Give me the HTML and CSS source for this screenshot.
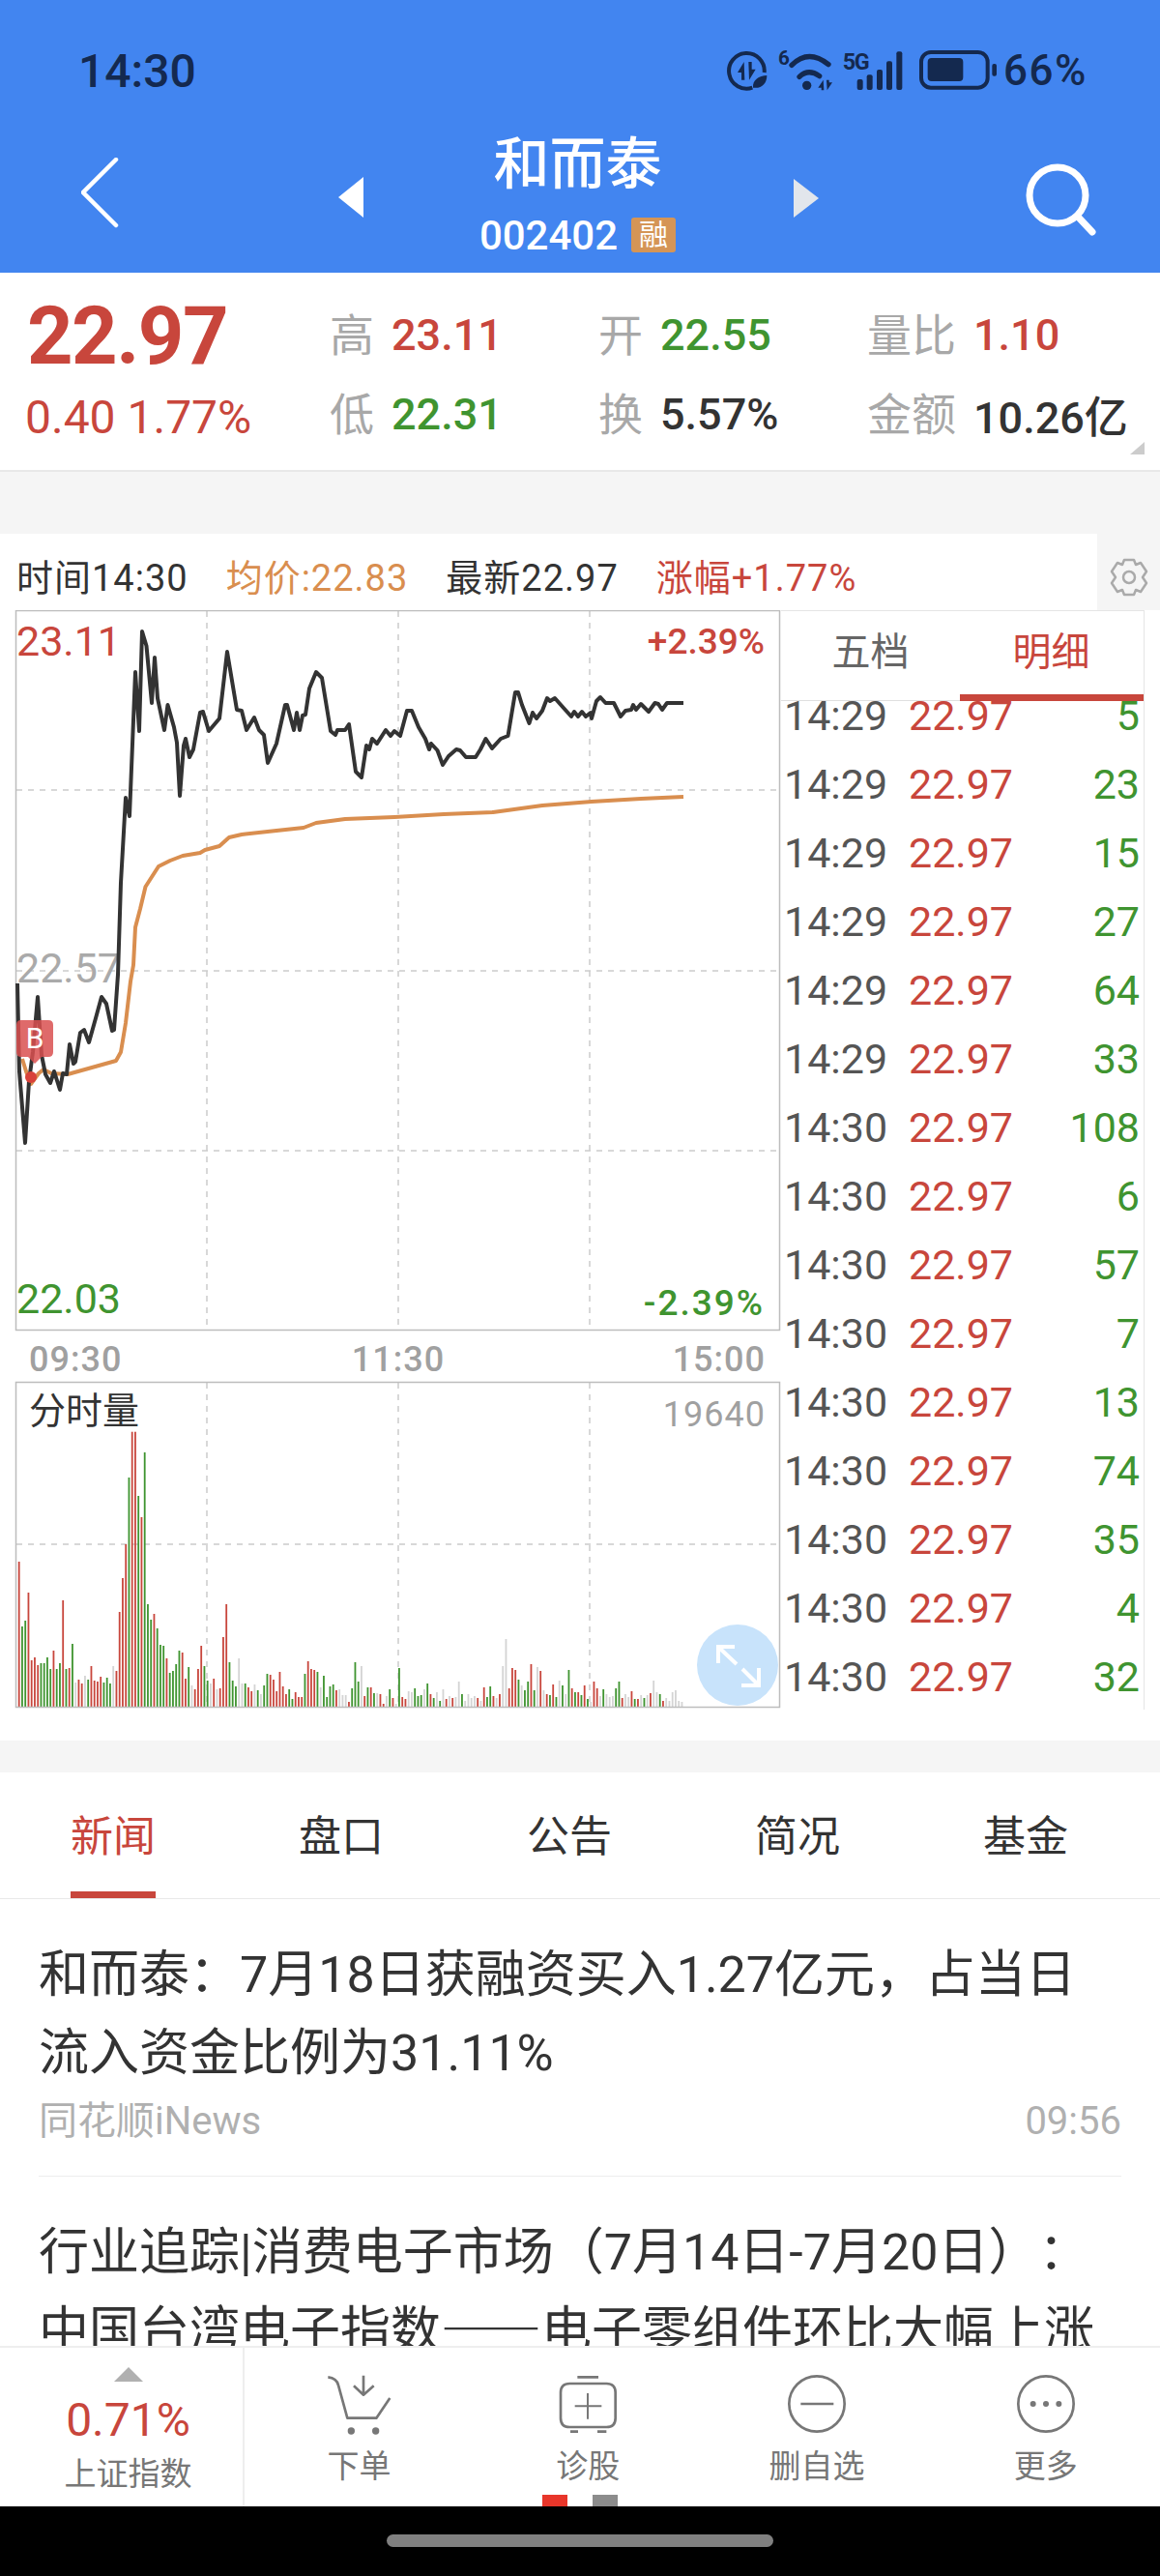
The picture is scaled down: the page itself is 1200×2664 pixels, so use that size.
FILE: index.html
```html
<!DOCTYPE html>
<html lang="zh-CN">
<head>
    <meta charset="UTF-8">
    <meta name="viewport" content="width=device-width, initial-scale=1.0">
    <title>和而泰 002402</title>
    <link rel="stylesheet" href="styles.css">
</head>
<body>
<div class="page">
    <header class="header">
        <div class="status-bar">
            <span class="clock">14:30</span>
            <div class="status-icons">
                <svg class="status-svg" viewBox="0 0 888 180">
                    <path class="ink-line" d="M118 152A55 55 0 1 1 155 105"/>
                    <path class="ink" d="M92 72L72 105H84V128H94ZM108 128L128 95H116V72H106Z"/>
                    <path class="ink" d="M120 152C118 128 138 115 163 114C163 140 146 156 120 152Z"/>
                    <text class="status-six" x="198" y="82">6</text>
                    <path class="ink-line wifi" d="M240 82Q292 30 354 80M264 118Q292 92 326 116"/>
                    <circle class="ink" cx="287" cy="145" r="14"/>
                    <path class="ink" d="M338 128L322 152H332V160H340ZM350 160L366 136H356V128H348Z"/>
                    <text class="status-5g" x="398" y="96">5G</text>
                    <rect class="ink" x="443" y="126" width="18" height="33" rx="6"/>
                    <rect class="ink" x="473" y="112" width="18" height="47" rx="6"/>
                    <rect class="ink" x="504" y="96" width="18" height="63" rx="6"/>
                    <rect class="ink" x="534" y="70" width="18" height="89" rx="6"/>
                    <rect class="ink" x="565" y="40" width="18" height="119" rx="6"/>
                    <rect class="ink-line" x="642" y="42" width="206" height="110" rx="30"/>
                    <rect class="ink" x="662" y="60" width="110" height="72" rx="12"/>
                    <rect class="ink" x="862" y="78" width="14" height="38" rx="6"/>
                </svg>
                <span class="battery">66%</span>
            </div>
        </div>
        <div class="title-bar">
            <svg class="back-icon" width="40" height="76" viewBox="0 0 40 76">
                <path d="M36 2L2 36L36 70"/>
            </svg>
            <div class="title-center">
                <svg class="arrow-left" width="26" height="42" viewBox="0 0 26 42"><path d="M26 0L0 21L26 42Z"/></svg>
                <div class="title-col">
                    <div class="stock-name">和而泰</div>
                    <div class="stock-code">002402<span class="badge">融</span></div>
                </div>
                <svg class="arrow-right" width="26" height="40" viewBox="0 0 26 40"><path d="M0 0L26 20L0 40Z"/></svg>
            </div>
            <svg class="search-icon" width="80" height="84" viewBox="0 0 80 84">
                <circle cx="36" cy="36" r="29"/>
                <path d="M57 58L72 74"/>
            </svg>
        </div>
    </header>

    <div class="scroll">
        <section class="quote">
            <div class="big-price">22.97</div>
            <div class="stat"><span class="stat-label">高</span><span class="up">23.11</span></div>
            <div class="stat"><span class="stat-label">开</span><span class="down">22.55</span></div>
            <div class="stat"><span class="stat-label">量比</span><span class="up">1.10</span></div>
            <div class="change">0.40 1.77%</div>
            <div class="stat"><span class="stat-label">低</span><span class="down">22.31</span></div>
            <div class="stat"><span class="stat-label">换</span><span class="plain">5.57%</span></div>
            <div class="stat"><span class="stat-label">金额</span><span class="plain">10.26亿</span></div>
            <i class="corner"></i>
        </section>

        <section class="chart-block">
            <div class="chart-head">
                <div class="chart-info">
                    <span>时间14:30</span>
                    <span class="avg">均价:22.83</span>
                    <span>最新22.97</span>
                    <span class="up">涨幅+1.77%</span>
                </div>
                <div class="gear-box">
                    <svg class="gear" width="44" height="44" viewBox="0 0 44 44">
                        <path d="M17 4H27L29 9L34 7L40 16L36 22L40 28L34 37L29 35L27 40H17L15 35L10 37L4 28L8 22L4 16L10 7L15 9Z"/>
                        <circle cx="22" cy="22" r="6"/>
                    </svg>
                </div>
            </div>
            <div class="chart-row">
                <svg class="chart" width="808" height="1137" viewBox="0 633 808 1137">
                    <path class="grid" d="M214 634V1378M412 634V1378M610 634V1378M17 819H806M17 1006H806M17 1192H806"/>
                    <path class="grid" d="M214 1432V1767M412 1432V1767M610 1432V1767M17 1599H806"/>
                    <g id="volBars"></g>
                    <rect class="label-bg" x="17" y="1432" width="128" height="51"/>
                    <rect class="frame" x="16.5" y="633.5" width="790" height="744"/>
                    <rect class="frame" x="16.5" y="1431.5" width="790" height="336"/>

                    <text class="axis up" x="17" y="680">23.11</text>
                    <text class="axis muted" x="17" y="1018">22.57</text>
                    <text class="axis down" x="17" y="1360">22.03</text>

                    <polyline class="avg-line" points="23,1097 27,1110 32,1123 40,1112 45,1108 53,1112 70,1113 120,1099 125,1090 130,1060 135,1017 138,1000 140,961 145,942 150.5,919 164,898 176,892 189,887 207,884 212,881 227,877 237,868 250,865 286,861 314,858 327,853 357,849 408,847 459,844 510,842 561,835 612,831 663,828 707,826"/>
                    <polyline class="price-line" points="18,1019 20,1110 26,1184 30,1120 34,1090 39,1033 43,1093 47,1113 52,1122 56,1110 62,1129 65,1112 69,1113 72,1082 76,1102 78,1100 83,1070 87,1067 92,1080 99,1055 105,1033 110,1040 116,1068 118,1067 122,1010 125,915 130,827 134,846 140,697 144,758 147,655 151.5,670 157,729 160,682 163,724 170,757 173.5,731 180,754 183,770 186,825 190,773 192,766 196,785 200,777 207,739 210,738 216,758 227,745 235,676 245,736 250,737 255,757 263,744 268,757 273,762 277,791 286,771 295,731 297,731 304,757 307,739 310,757 313,742 316,741 320,714 327,697 333,703 342,758 347,762 349,757 357,757 361,751 368,800 374,806 379,773 382,777 385,766 390,771 399,757 404,763 408,758 414,763 421,737 426,737 433,754 440,766 444,777 446,771 452.5,778 458,793 464,784 472,777 476,778 482,785 492,785 497,777 502.5,766 509,776 518,766 525.5,763 533,718 536,718 540,731 547.5,750 551,739 555,745 561,737 566,724 569,727 574,724 582,733 591,743 594,738 598,743 602,738 606,743 611,739 612,745 617,727 621,723 626.5,729 635,729 642,743 647,737 653,736 655,731 658,736 663,730 671,738 677.5,729 681,730 685,736 690,729 707,729"/>

                    <path class="b-flag" d="M22 1057H50Q55 1057 55 1062V1090Q55 1095 50 1095H43L36 1102L29 1095H22Q17 1095 17 1090V1062Q17 1057 22 1057Z"/>
                    <circle class="b-dot" cx="32" cy="1116" r="6"/>
                    <text class="b-text" x="36" y="1086">B</text>

                    <text class="pct up" x="791" y="678">+2.39%</text>
                    <text class="pct down" x="791" y="1362">-2.39%</text>
                    <text class="tick" x="30" y="1420">09:30</text>
                    <text class="tick mid" x="412" y="1420">11:30</text>
                    <text class="tick end" x="792" y="1420">15:00</text>
                    <text class="vol-title" x="30" y="1474">分时量</text>
                    <text class="vol-max" x="792" y="1477">19640</text>

                    <circle class="expand-bg" cx="763" cy="1724" r="42"/>
                    <path class="expand-arrows" d="M762 1723L745 1707M743 1722V1705H760M768 1728L783 1743M785 1727V1745H767"/>
                </svg>
                <div class="side">
                    <div class="side-tabs">
                        <div class="side-tab">五档</div>
                        <div class="side-tab active">明细</div>
                    </div>
                    <div class="trades">
                        <div class="trade"><span>14:29</span><span class="up">22.97</span><span class="down">5</span></div>
                        <div class="trade"><span>14:29</span><span class="up">22.97</span><span class="down">23</span></div>
                        <div class="trade"><span>14:29</span><span class="up">22.97</span><span class="down">15</span></div>
                        <div class="trade"><span>14:29</span><span class="up">22.97</span><span class="down">27</span></div>
                        <div class="trade"><span>14:29</span><span class="up">22.97</span><span class="down">64</span></div>
                        <div class="trade"><span>14:29</span><span class="up">22.97</span><span class="down">33</span></div>
                        <div class="trade"><span>14:30</span><span class="up">22.97</span><span class="down">108</span></div>
                        <div class="trade"><span>14:30</span><span class="up">22.97</span><span class="down">6</span></div>
                        <div class="trade"><span>14:30</span><span class="up">22.97</span><span class="down">57</span></div>
                        <div class="trade"><span>14:30</span><span class="up">22.97</span><span class="down">7</span></div>
                        <div class="trade"><span>14:30</span><span class="up">22.97</span><span class="down">13</span></div>
                        <div class="trade"><span>14:30</span><span class="up">22.97</span><span class="down">74</span></div>
                        <div class="trade"><span>14:30</span><span class="up">22.97</span><span class="down">35</span></div>
                        <div class="trade"><span>14:30</span><span class="up">22.97</span><span class="down">4</span></div>
                        <div class="trade"><span>14:30</span><span class="up">22.97</span><span class="down">32</span></div>
                    </div>
                </div>
            </div>
        </section>

        <section class="news">
            <nav class="news-tabs">
                <div class="news-tab"><span class="active">新闻</span></div>
                <div class="news-tab"><span>盘口</span></div>
                <div class="news-tab"><span>公告</span></div>
                <div class="news-tab"><span>简况</span></div>
                <div class="news-tab"><span>基金</span></div>
            </nav>
            <article class="news-item">
                <div class="news-title">和而泰：7月18日获融资买入1.27亿元，占当日<br>流入资金比例为31.11%</div>
                <div class="news-meta"><span>同花顺iNews</span><span>09:56</span></div>
            </article>
            <article class="news-item">
                <div class="news-title">行业追踪|消费电子市场（7月14日-7月20日）：<br>中国台湾电子指数<span class="cjk">——</span>电子零组件环比大幅上涨</div>
            </article>
        </section>
    </div>

    <footer class="toolbar">
        <div class="index-cell">
            <i class="index-arrow"></i>
            <div class="index-value">0.71%</div>
            <div class="index-name">上证指数</div>
        </div>
        <div class="tool">
            <svg class="tool-icon" width="100" height="80" viewBox="0 0 300 240">
                <path d="M55 55Q82 58 87 80L115 182H205L247 120M165 50V108M135 82L165 110L197 82"/>
                <circle class="dot" cx="127" cy="222" r="11"/>
                <circle class="dot" cx="203" cy="222" r="11"/>
            </svg>
            <span>下单</span>
        </div>
        <div class="tool">
            <svg class="tool-icon" width="100" height="80" viewBox="712 0 300 240">
                <path d="M830 55H895M920 224H892M832 224H808M806 75H920Q948 75 948 103V182Q948 210 920 210H806Q778 210 778 182V103Q778 75 806 75Z"/>
                <path class="thin" d="M862 105V185M822 145H905"/>
            </svg>
            <span>诊股</span>
        </div>
        <div class="tool">
            <svg class="tool-icon" width="100" height="80" viewBox="0 0 300 240">
                <circle cx="150" cy="138" r="86"/>
                <path d="M100 138H202"/>
            </svg>
            <span>删自选</span>
        </div>
        <div class="tool">
            <svg class="tool-icon" width="100" height="80" viewBox="0 0 300 240">
                <circle cx="150" cy="138" r="86"/>
                <circle class="dot" cx="110" cy="138" r="9"/>
                <circle class="dot" cx="150" cy="138" r="9"/>
                <circle class="dot" cx="190" cy="138" r="9"/>
            </svg>
            <span>更多</span>
        </div>
        <div class="pager"><i class="on"></i><i></i></div>
    </footer>
    <div class="nav-bar"><i class="home-pill"></i></div>
</div>
<script src="script.js"></script>
</body>
</html>
```

FILE: styles.css
```css
* {
    box-sizing: border-box;
}

body {
    margin: 0;
    font-family: Roboto, "Noto Sans CJK SC", sans-serif;
    color: #333;
    background-color: #f5f5f5;
    text-spacing-trim: space-all;
}

.page {
    height: 2664px;
    display: flex;
    flex-direction: column;
    overflow: hidden;
}

.up { color: #c8463c; fill: #c8463c; }
.down { color: #3f9430; fill: #3f9430; }
.plain { color: #333; }
.cjk { font-family: "Noto Sans CJK SC", sans-serif; line-height: 0; }

/* header */
.header {
    height: 282px;
    background-color: #4285f0;
    flex-shrink: 0;
}

.status-bar {
    height: 130px;
    padding: 16px 75px 0 81px;
    display: flex;
    justify-content: space-between;
    align-items: center;
    color: #14294f;
}

.clock {
    font-size: 48px;
    font-weight: 500;
}

.status-icons {
    display: flex;
    align-items: center;
    gap: 3px;
}

.status-svg {
    width: 296px;
    height: 60px;
    margin-top: -6px;
}

.ink { fill: #14294f; }
.ink-line { fill: none; stroke: #14294f; stroke-width: 12; }
.wifi { stroke-width: 16; stroke-linecap: round; }
.status-six { font-size: 62px; font-weight: 700; fill: #14294f; }
.status-5g { font-size: 70px; font-weight: 700; fill: #14294f; letter-spacing: -4px; }

.battery {
    font-size: 44px;
    font-weight: 500;
    letter-spacing: 1.5px;
}

.title-bar {
    height: 152px;
    display: grid;
    grid-template-columns: 350px 497px 1fr;
}

.back-icon {
    margin: 33px 0 0 84px;
    fill: none;
    stroke: #fff;
    stroke-width: 4.5;
    stroke-linecap: round;
}

.title-center {
    display: flex;
    justify-content: space-between;
    align-items: flex-start;
}

.arrow-left { margin-top: 53px; fill: #fff; }
.arrow-right { margin-top: 55px; fill: #e2e6ec; }

.title-col {
    display: flex;
    flex-direction: column;
    align-items: center;
    padding-top: 8px;
    margin-left: -2px;
}

.stock-name {
    font-size: 58px;
    line-height: 64px;
    font-weight: 500;
    color: #fff;
}

.stock-code {
    margin-top: 21px;
    height: 40px;
    display: flex;
    align-items: center;
    gap: 14px;
    font-size: 42px;
    font-weight: 500;
    color: #fff;
}

.badge {
    width: 46px;
    height: 36px;
    border-radius: 3px;
    background-color: #d59556;
    font-size: 30px;
    font-weight: 400;
    line-height: 36px;
    text-align: center;
}

.search-icon {
    justify-self: end;
    margin: 36px 62px 0 0;
    fill: none;
    stroke: #fff;
    stroke-width: 7;
    stroke-linecap: round;
}

.scroll {
    flex: 1;
    overflow: hidden;
}

/* quote */
.quote {
    position: relative;
    height: 206px;
    padding-top: 23px;
    display: grid;
    grid-template-columns: 341px 278px 278px 1fr;
    grid-auto-rows: 82px;
    align-items: center;
    background-color: #fff;
    border-bottom: 2px solid #e8e8e8;
}

.big-price {
    padding: 3px 0 0 28px;
    font-size: 83px;
    font-weight: 700;
    letter-spacing: -1.5px;
    color: #c8463c;
    line-height: 82px;
}

.change {
    padding: 6px 0 0 26px;
    font-size: 48px;
    color: #c8463c;
}

.stat {
    display: flex;
    align-items: center;
    gap: 18px;
    font-size: 45px;
    font-weight: 500;
    white-space: nowrap;
}

.stat-label {
    margin-bottom: 6px;
    font-size: 46px;
    font-weight: 400;
    color: #a8a8a8;
}

.corner {
    position: absolute;
    right: 16px;
    bottom: 16px;
    border-left: 15px solid transparent;
    border-bottom: 13px solid #ccc;
}

/* chart */
.chart-block {
    margin-top: 64px;
    padding-bottom: 32px;
    background-color: #fff;
}

.chart-head {
    height: 79px;
    display: flex;
    justify-content: space-between;
}

.chart-info {
    display: flex;
    align-items: center;
    gap: 39px;
    padding: 5px 0 0 17px;
    font-size: 38px;
    letter-spacing: 1px;
}

.chart-info .avg { color: #d98e4f; }

.gear-box {
    width: 65px;
    padding-top: 10px;
    display: flex;
    align-items: center;
    justify-content: center;
    background-color: #f5f5f5;
}

.gear {
    fill: none;
    stroke: #aaa;
    stroke-width: 2.5;
    stroke-linejoin: round;
}

.chart-row {
    display: flex;
}

.chart {
    display: block;
    flex-shrink: 0;
}

.frame { fill: none; stroke: #bdbdbd; stroke-width: 1.5; }
.grid { fill: none; stroke: #ccc; stroke-width: 1.5; stroke-dasharray: 6 6; }
.label-bg { fill: #fff; opacity: 0.7; }
.price-line { fill: none; stroke: #333; stroke-width: 4; stroke-linejoin: round; }
.avg-line { fill: none; stroke: #d98e4f; stroke-width: 4; stroke-linejoin: round; }
.b-flag { fill: #d95050; opacity: 0.85; }
.b-dot { fill: #d8423a; }
.b-text { font-size: 30px; fill: #fff; text-anchor: middle; }

.axis { font-size: 43px; }
.axis.muted { fill: #aaa; }
.pct { font-size: 37px; font-weight: 500; text-anchor: end; }
.pct.down { letter-spacing: 2px; }
.tick { font-size: 36px; font-weight: 500; fill: #a0a0a0; letter-spacing: 1px; }
.tick.mid { text-anchor: middle; }
.tick.end { text-anchor: end; }
.vol-title { font-size: 38px; fill: #333; }
.vol-max { font-size: 36px; fill: #a0a0a0; text-anchor: end; letter-spacing: 1px; }
.expand-bg { fill: #c8e3fb; }
.expand-arrows { fill: none; stroke: #fff; stroke-width: 4; }

.bar-r { stroke: #c8463c; }
.bar-g { stroke: #3f9430; }
.bar-n { stroke: #d4d4d4; }
.bars { fill: none; stroke-width: 1.8; }

.side {
    width: 376px;
    height: 1137px;
    border-top: 1px solid #e5e5e5;
    border-right: 1px solid #e5e5e5;
    overflow: hidden;
}

.side-tabs {
    display: grid;
    grid-template-columns: 185px 191px;
    height: 88px;
}

.side-tab {
    font-size: 40px;
    line-height: 86px;
    text-align: center;
    color: #666;
    border-bottom: 1px solid #e0e0e0;
}

.side-tab.active {
    padding-right: 2px;
    color: #c8463c;
    border-bottom: 7px solid #c8463c;
}

.trades {
    margin-top: -16px;
}

.trade {
    height: 71px;
    padding: 0 4px 0 3px;
    display: grid;
    grid-template-columns: 129px 1fr auto;
    align-items: center;
    font-size: 43px;
    color: #555;
}

/* news */
.news {
    margin-top: 33px;
    background-color: #fff;
    height: 700px;
}

.news-tabs {
    height: 131px;
    margin-left: -1px;
    padding-right: 21px;
    display: flex;
    border-bottom: 1px solid #e8e8e8;
}

.news-tab {
    flex: 1;
    display: flex;
    justify-content: center;
    font-size: 44px;
    color: #333;
}

.news-tab span {
    height: 130px;
    line-height: 134px;
}

.news-tab .active {
    color: #c8463c;
    border-bottom: 7px solid #c8463c;
}

.news-item {
    margin: 0 40px;
    padding: 38px 0 31px;
    border-bottom: 1px solid #eee;
}

.news-title {
    font-size: 52px;
    line-height: 81px;
    color: #333;
    white-space: nowrap;
}

.news-meta {
    margin-top: 5px;
    display: flex;
    justify-content: space-between;
    font-size: 40px;
    line-height: 50px;
    color: #b0b0b0;
}

/* bottom toolbar */
.toolbar {
    position: relative;
    height: 166px;
    flex-shrink: 0;
    display: flex;
    background-color: #fff;
    border-top: 2px solid #eee;
}

.index-cell {
    width: 253px;
    padding-left: 14px;
    display: flex;
    flex-direction: column;
    align-items: center;
    border-right: 2px solid #eee;
}

.index-arrow {
    margin-top: 20px;
    border-left: 15px solid transparent;
    border-right: 15px solid transparent;
    border-bottom: 15px solid #b0b0b0;
}

.index-value {
    margin-top: 13px;
    font-size: 48px;
    line-height: 54px;
    color: #c8463c;
}

.index-name {
    margin-top: 7px;
    font-size: 33px;
    line-height: 44px;
    color: #777;
}

.tool {
    flex: 1;
    display: flex;
    flex-direction: column;
    align-items: center;
    padding-top: 12px;
    font-size: 33px;
    line-height: 44px;
    color: #777;
}

.tool-icon {
    fill: none;
    stroke: #777;
    stroke-width: 8;
    stroke-linejoin: round;
    margin-bottom: 9px;
}

.tool-icon .thin { stroke-width: 6; }
.tool-icon .dot { fill: #777; stroke: none; }

.pager {
    position: absolute;
    left: 0;
    right: 0;
    bottom: 0;
    display: flex;
    justify-content: center;
    gap: 26px;
}

.pager i {
    width: 26px;
    height: 12px;
    background-color: #8c8c8c;
}

.pager .on {
    background-color: #e8362a;
}

.nav-bar {
    height: 72px;
    flex-shrink: 0;
    background-color: #000;
    display: flex;
    justify-content: center;
    padding-top: 29px;
}

.home-pill {
    width: 400px;
    height: 13px;
    border-radius: 7px;
    background-color: #808080;
}
```

FILE: script.js
```js
// volume per minute: height in px + r(up) g(down) n(flat)
const volData = "150r 83g 89g 118r 48r 51r 43r 45g 45g 51g 39g 58r 39g 45g 110r 39g 40r 65g 25n 28r 24r 32n 28g 42r 27r 26r 31r 25g 30g 24g 42n 37r 98r 133r 168r 237g 285r 285r 218g 196r 263g 106g 90g 96r 81g 64g 63g 50r 35g 37g 44g 58g 56r 29r 41g 22n 18r 39r 63r 42g 27g 24n 29r 18n 19r 72r 106r 46g 27g 21g 50n 24n 24g 20r 16r 23n 17g 13n 22g 34g 33r 28r 16r 36r 21r 13r 18g 8g 15r 10r 10r 34g 47r 39r 38r 36g 20n 32g 10g 21g 23g 17r 18n 12n 12n 5r 19g 46g 26g 42n 11r 20g 20r 14g 14n 13r 3r "
    + "11n 18g 9r 3n 40g 10r 8r 16n 15n 19g 11g 12g 18n 24g 13r 9g 15n 6g 18n 8r 11n 9r 10n 26n 13g 6n 13n 9n 11n 9r 6n 20r 10g 21g 11r 9n 13r 42n 70n 19r 40r 38r 28g 22n 17g 26g 44r 17g 41n 37r 17n 13r 12g 23r 10g 27n 22g 13n 38g 19r 15g 15r 12g 22r 8g 5n 26r 19r 11n 18g 13n 10n 11n 19g 26g 9r 13n 10n 16r 8g 8r 12n 9g 12n 14r 27n 15n 13g 6r 9n 6n 15n 17n 6n 5n";

const baseY = 1767;
const paths = { r: "", g: "", n: "" };

volData.split(" ").forEach(function (item, i) {
    const h = parseInt(item);
    const kind = item.slice(-1);
    const x = (19.7 + i * 3.25).toFixed(2);
    paths[kind] += "M" + x + " " + baseY + "v-" + h;
});

const group = document.getElementById("volBars");
Object.keys(paths).forEach(function (kind) {
    const p = document.createElementNS("http://www.w3.org/2000/svg", "path");
    p.setAttribute("d", paths[kind]);
    p.setAttribute("class", "bars bar-" + kind);
    group.appendChild(p);
});
```
